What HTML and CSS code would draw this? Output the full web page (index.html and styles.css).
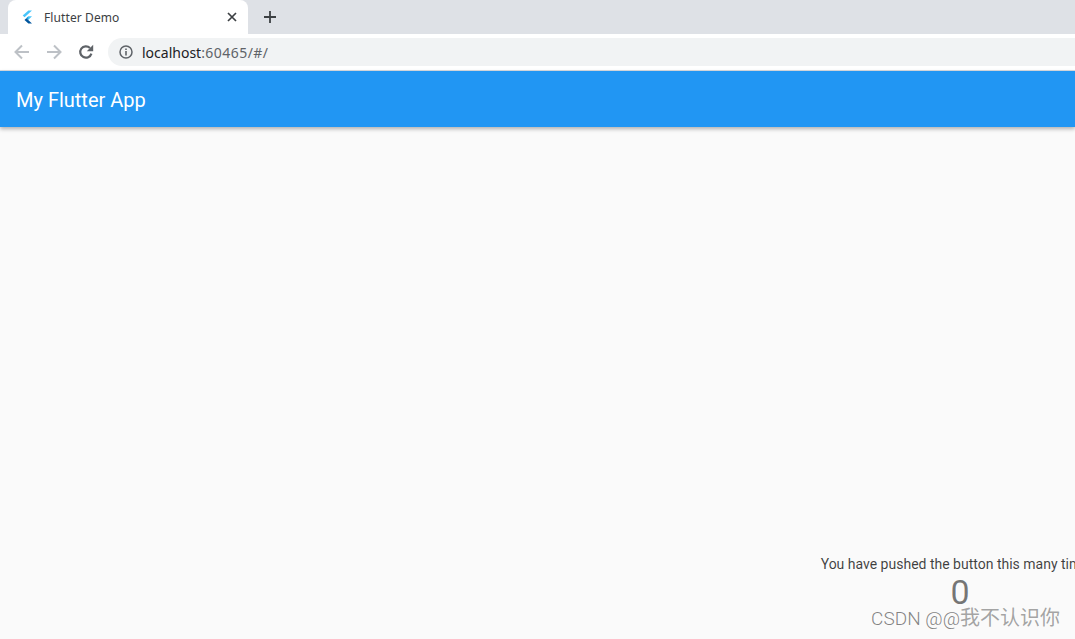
FILE: index.html
```html
<!DOCTYPE html>
<html lang="en">
<head>
  <meta charset="UTF-8" />
  <title>Flutter Demo</title>
  <link rel="stylesheet" href="styles.css">
</head>
<body>

  <!-- Browser tab strip -->
  <div class="tab-strip">
    <div class="tab">
      <svg class="tab-icon" width="12" height="14" viewBox="0 0 12 14">
        <path d="M7.4 0.6H11L3.6 7.3 1.7 5.6Z" fill="#47c5fb"/>
        <path d="M7.4 6.3H11L7.2 10 5.3 8.2Z" fill="#47c5fb"/>
        <path d="M5.3 8.2 7.2 6.4 7.2 10Z" fill="#1f9fd8"/>
        <path d="M5.3 8.2 7.2 10 11 13.4H7.4L3.5 10Z" fill="#00569e"/>
      </svg>
      <span class="tab-title">Flutter Demo</span>
      <svg class="tab-close" width="10" height="10" viewBox="0 0 10 10">
        <path d="M1 1 9 9M9 1 1 9" stroke="#3c4043" stroke-width="1.7" fill="none"/>
      </svg>
    </div>
    <svg class="new-tab" width="12" height="12" viewBox="0 0 12 12">
      <path d="M6 0V12M0 6H12" stroke="#3c4043" stroke-width="1.8" fill="none"/>
    </svg>
  </div>

  <!-- Browser toolbar -->
  <div class="toolbar">
    <svg class="nav-icon" width="16" height="16" viewBox="0 0 16 16">
      <path d="M15 8H2M8 1.5 1.5 8 8 14.5" stroke="#bdc1c6" stroke-width="2" fill="none"/>
    </svg>
    <svg class="nav-icon" width="16" height="16" viewBox="0 0 16 16">
      <path d="M1 8H14M8 1.5 14.5 8 8 14.5" stroke="#bdc1c6" stroke-width="2" fill="none"/>
    </svg>
    <svg class="nav-icon" width="16" height="16" viewBox="0 0 16 16">
      <path d="M13.4 9.6A5.7 5.7 0 1 1 12 4" stroke="#5f6368" stroke-width="2.2" fill="none"/>
      <path d="M15.2 0.8V7.2H8.8Z" fill="#5f6368"/>
    </svg>
    <div class="omnibox">
      <svg class="info-icon" width="14" height="14" viewBox="0 0 14 14">
        <circle cx="7" cy="7" r="6" stroke="#5f6368" stroke-width="1.5" fill="none"/>
        <path d="M6.2 6H7.8V10.5H6.2ZM6.2 3.4H7.8V4.9H6.2Z" fill="#5f6368"/>
      </svg>
      <span class="url-host">localhost</span><span class="url-rest">:60465/#/</span>
    </div>
  </div>

  <!-- Flutter app -->
  <header class="app-bar">My Flutter App</header>
  <div class="app-body">
    <div class="counter-text">You have pushed the button this many times:</div>
    <div class="counter-value">0</div>
  </div>

  <div class="watermark"><span class="watermark-latin">CSDN @@</span>我不认识你</div>

</body>
</html>
```

FILE: styles.css
```css
html, body {
  height: 100%;
}

body {
  margin: 0;
  overflow: hidden;
  display: flex;
  flex-direction: column;
  background-color: #fafafa;
  font-family: Roboto, Arial, sans-serif;
  color: #333;
}

/* Tab strip */
.tab-strip {
  height: 34px;
  flex: none;
  display: flex;
  align-items: center;
  background-color: #dee1e6;
  padding-left: 8px;
}

.tab {
  width: 240px;
  height: 34px;
  box-sizing: border-box;
  display: flex;
  align-items: center;
  padding: 0 11px 0 13px;
  background-color: #ffffff;
  border-radius: 8px 8px 0 0;
}

.tab-icon {
  flex: none;
}

.tab-title {
  flex: 1;
  margin-left: 11px;
  font-family: "Noto Sans", Arial, sans-serif;
  font-size: 12px;
  letter-spacing: 0.1px;
  color: #3c4043;
}

.new-tab {
  margin-left: 16px;
}

/* Toolbar */
.toolbar {
  height: 36px;
  flex: none;
  display: flex;
  align-items: center;
  padding-left: 14px;
  background-color: #ffffff;
  border-bottom: 1px solid #dadce0;
}

.nav-icon {
  flex: none;
  margin-right: 16px;
}

.omnibox {
  flex: 1;
  height: 28px;
  display: flex;
  align-items: center;
  margin-right: -20px;
  margin-left: -2px;
  padding-left: 11px;
  background-color: #f1f3f4;
  border-radius: 14px;
  font-family: "Noto Sans", Arial, sans-serif;
  font-size: 14px;
}

.info-icon {
  flex: none;
  margin-right: 9px;
}

.url-host {
  color: #202124;
}

.url-rest {
  color: #5f6368;
  letter-spacing: 0.45px;
}

/* App */
.app-bar {
  height: 56px;
  box-sizing: border-box;
  padding: 2px 0 0 16px;
  flex: none;
  display: flex;
  align-items: center;
  background-color: #2196f3;
  color: white;
  font-size: 20px;
  font-weight: 400;
  box-shadow: 0 2px 4px rgba(0, 0, 0, 0.3);
}

.app-body {
  width: 1920px;
  padding-top: 427px;
  display: flex;
  flex-direction: column;
  align-items: center;
}

.counter-text {
  font-size: 14px;
  line-height: 20px;
  color: rgba(0, 0, 0, 0.75);
}

.counter-value {
  font-size: 34px;
  line-height: 36px;
  color: rgba(0, 0, 0, 0.54);
}

.watermark {
  position: absolute;
  right: 15px;
  bottom: 8px;
  font-family: "Noto Sans CJK SC", sans-serif;
  font-size: 20px;
  font-weight: 400;
  color: rgba(125, 125, 125, 0.7);
}

.watermark-latin {
  font-family: Roboto, sans-serif;
  font-size: 19px;
  font-weight: 300;
  color: rgba(110, 110, 110, 0.85);
}
```
